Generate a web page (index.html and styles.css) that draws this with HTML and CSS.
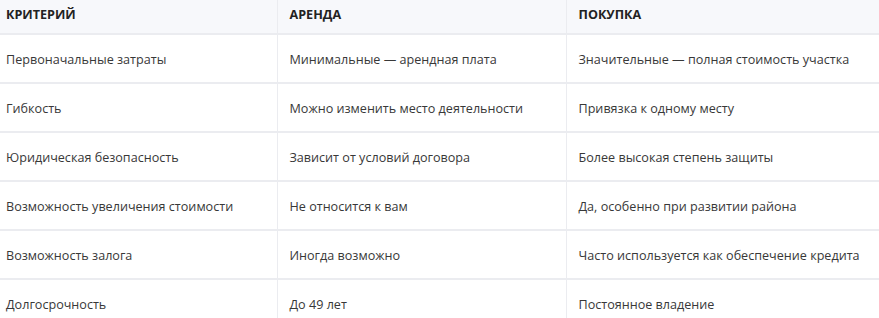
FILE: index.html
```html
<!DOCTYPE html>
<html lang="ru">
<head>
<meta charset="utf-8">
<link rel="stylesheet" href="styles.css">
</head>
<body>
<div class="wrap">
<table class="cmp">
  <colgroup>
    <col class="c1">
    <col class="c2">
    <col class="c3">
  </colgroup>
  <thead>
    <tr><th>Критерий</th><th>Аренда</th><th>Покупка</th></tr>
  </thead>
  <tbody>
    <tr><td>Первоначальные затраты</td><td>Минимальные — арендная плата</td><td>Значительные — полная стоимость участка</td></tr>
    <tr><td>Гибкость</td><td>Можно изменить место деятельности</td><td>Привязка к одному месту</td></tr>
    <tr><td>Юридическая безопасность</td><td>Зависит от условий договора</td><td>Более высокая степень защиты</td></tr>
    <tr><td>Возможность увеличения стоимости</td><td>Не относится к вам</td><td>Да, особенно при развитии района</td></tr>
    <tr><td>Возможность залога</td><td>Иногда возможно</td><td>Часто используется как обеспечение кредита</td></tr>
    <tr><td>Долгосрочность</td><td>До 49 лет</td><td>Постоянное владение</td></tr>
  </tbody>
</table>
</div>
</body>
</html>
```
FILE: styles.css
```css
html, body {
  margin: 0;
  padding: 0;
  background: #ffffff;
}
.wrap {
  width: 879px;
  overflow: hidden;
}
.cmp {
  border-collapse: collapse;
  width: 885px;
  margin-left: -6px;
  table-layout: fixed;
  font-family: "Open Sans", "Noto Sans", sans-serif;
  font-size: 12.6px;
  color: #383838;
}
.c1 { width: 283px; }
.c2 { width: 289px; }
.c3 { width: 313px; }
.cmp th, .cmp td {
  text-align: left;
  padding: 0 12px;
  white-space: nowrap;
  overflow: hidden;
}
.cmp th {
  height: 28px;
  padding-bottom: 5px;
  background: #f7f8fb;
  font-weight: 700;
  text-transform: uppercase;
  color: #222222;
  border-bottom: 2px solid #ebecf0;
  border-right: 1px solid #ebecf0;
}
.cmp td {
  height: 45px;
  padding-top: 2px;
  border-bottom: 2px solid #ebecf0;
  border-right: 1px solid #ebecf0;
}
.cmp th:last-child, .cmp td:last-child { border-right: none; }
```
